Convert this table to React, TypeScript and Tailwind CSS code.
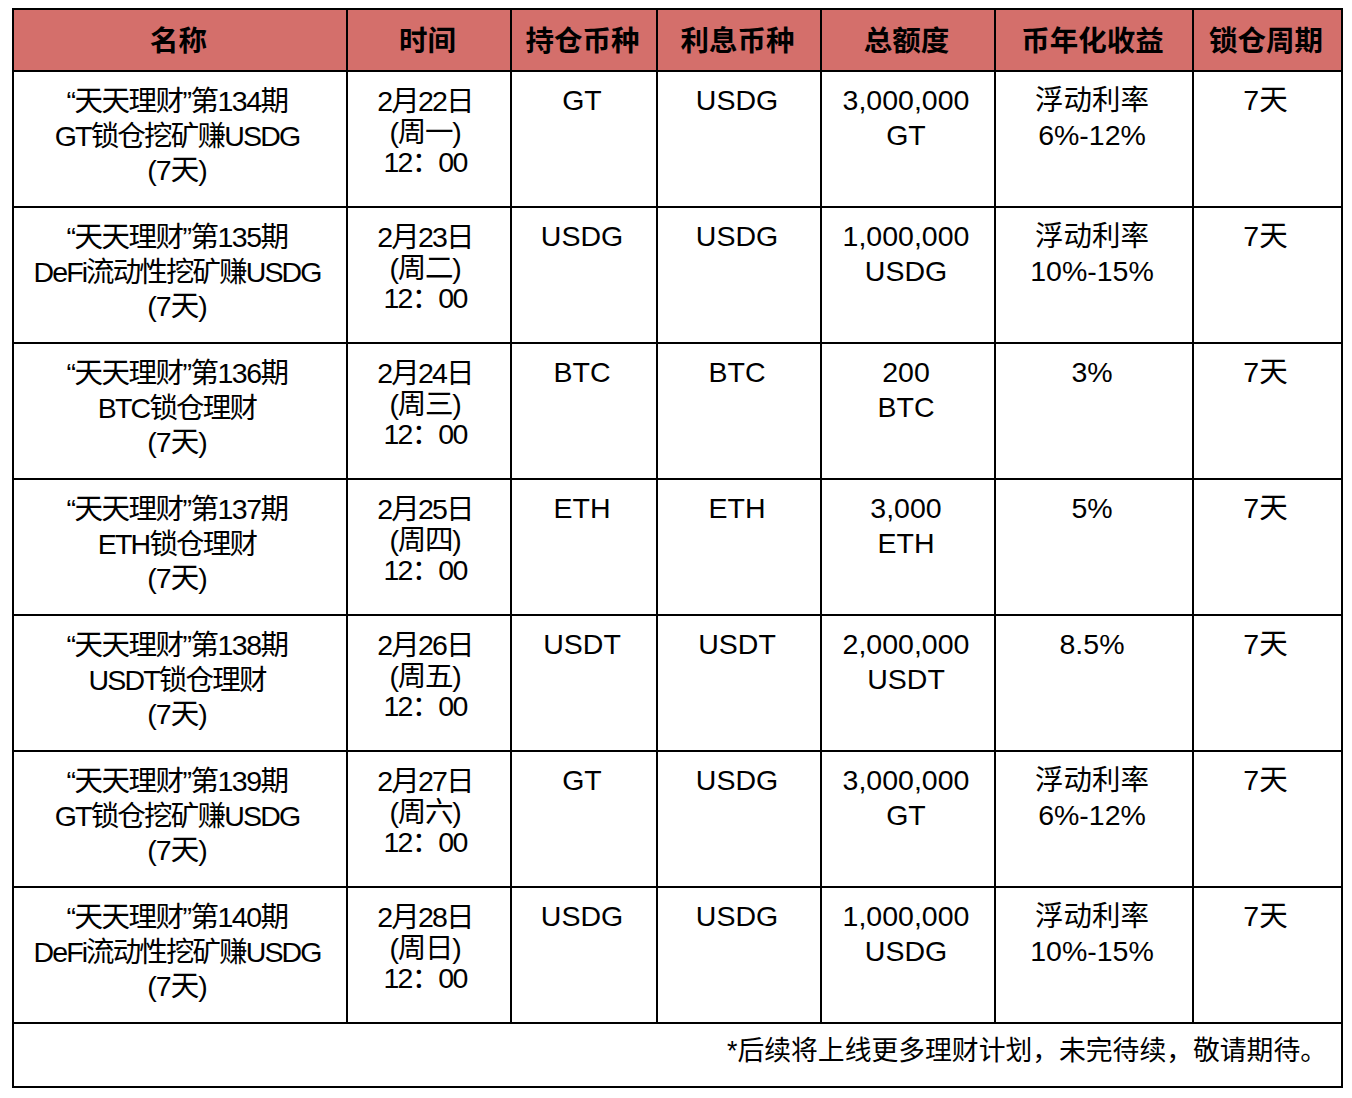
import React from "react";

type Row = {
  name: [string, string, string];
  date: string;
  day: string;
  hold: string;
  interest: string;
  amount: [string, string];
  rate: string[];
};

const rows: Row[] = [
  {
    name: ["“天天理财”第134期", "GT锁仓挖矿赚USDG", "(7天)"],
    date: "2月22日",
    day: "(周一)",
    hold: "GT",
    interest: "USDG",
    amount: ["3,000,000", "GT"],
    rate: ["浮动利率", "6%-12%"],
  },
  {
    name: ["“天天理财”第135期", "DeFi流动性挖矿赚USDG", "(7天)"],
    date: "2月23日",
    day: "(周二)",
    hold: "USDG",
    interest: "USDG",
    amount: ["1,000,000", "USDG"],
    rate: ["浮动利率", "10%-15%"],
  },
  {
    name: ["“天天理财”第136期", "BTC锁仓理财", "(7天)"],
    date: "2月24日",
    day: "(周三)",
    hold: "BTC",
    interest: "BTC",
    amount: ["200", "BTC"],
    rate: ["3%"],
  },
  {
    name: ["“天天理财”第137期", "ETH锁仓理财", "(7天)"],
    date: "2月25日",
    day: "(周四)",
    hold: "ETH",
    interest: "ETH",
    amount: ["3,000", "ETH"],
    rate: ["5%"],
  },
  {
    name: ["“天天理财”第138期", "USDT锁仓理财", "(7天)"],
    date: "2月26日",
    day: "(周五)",
    hold: "USDT",
    interest: "USDT",
    amount: ["2,000,000", "USDT"],
    rate: ["8.5%"],
  },
  {
    name: ["“天天理财”第139期", "GT锁仓挖矿赚USDG", "(7天)"],
    date: "2月27日",
    day: "(周六)",
    hold: "GT",
    interest: "USDG",
    amount: ["3,000,000", "GT"],
    rate: ["浮动利率", "6%-12%"],
  },
  {
    name: ["“天天理财”第140期", "DeFi流动性挖矿赚USDG", "(7天)"],
    date: "2月28日",
    day: "(周日)",
    hold: "USDG",
    interest: "USDG",
    amount: ["1,000,000", "USDG"],
    rate: ["浮动利率", "10%-15%"],
  },
];

const headers = ["名称", "时间", "持仓币种", "利息币种", "总额度", "币年化收益", "锁仓周期"];

// body cells: text starts near the top, slightly left of centre
const cell = "border-2 border-black align-top text-center pt-[11px] pl-0 pr-[4px] leading-[34.5px]";

export default function App() {
  return (
    <div
      className="bg-white w-[1352px] h-[1098px] pt-[8px] pl-[12px] text-black"
      style={{ fontFamily: '"Liberation Sans", "Noto Sans CJK SC", sans-serif' }}
    >
      <table className="table-fixed border-collapse w-[1329px] text-[28.5px]">
        <colgroup>
          <col className="w-[334px]" />
          <col className="w-[164px]" />
          <col className="w-[146px]" />
          <col className="w-[164px]" />
          <col className="w-[174px]" />
          <col className="w-[198px]" />
          <col className="w-[149px]" />
        </colgroup>
        <thead>
          <tr className="h-[62px] bg-[#d46f6b]">
            {headers.map((h) => (
              <th key={h} className="border-2 border-black font-bold align-middle text-center p-0 pt-[2px] pr-[3px] leading-[34px]">
                {h}
              </th>
            ))}
          </tr>
        </thead>
        <tbody>
          {rows.map((r) => (
            <tr key={r.name[0]} className="h-[136px]">
              <td className="border-2 border-black align-top text-center pt-[12px] pl-0 pr-[6px] leading-[34.5px]">
                <div className="tracking-[-1.5px]">{r.name[0]}</div>
                <div className={r.name[1].startsWith("DeFi") ? "tracking-[-1.9px]" : "tracking-[-1.8px]"}>
                  {r.name[1]}
                </div>
                <div className="tracking-[-1px]">{r.name[2]}</div>
              </td>
              <td className="border-2 border-black align-top text-center pt-[14px] pl-0 pr-[8px] leading-[30.5px] tracking-[-1.8px]">
                <div>{r.date}</div>
                <div className="tracking-[-1.2px]">{r.day}</div>
                <div>12：00</div>
              </td>
              <td className={cell}>{r.hold}</td>
              <td className={cell}>{r.interest}</td>
              <td className={cell}>
                <div>{r.amount[0]}</div>
                <div>{r.amount[1]}</div>
              </td>
              <td className={cell}>
                {r.rate.map((t) => (
                  <div key={t}>{t}</div>
                ))}
              </td>
              <td className={cell}>7天</td>
            </tr>
          ))}
          <tr className="h-[64px]">
            <td colSpan={7} className="border-2 border-black text-right align-middle pr-[14px] pb-[8px] text-[26.8px] leading-[34px]">
              *后续将上线更多理财计划，未完待续，敬请期待。
            </td>
          </tr>
        </tbody>
      </table>
    </div>
  );
}
